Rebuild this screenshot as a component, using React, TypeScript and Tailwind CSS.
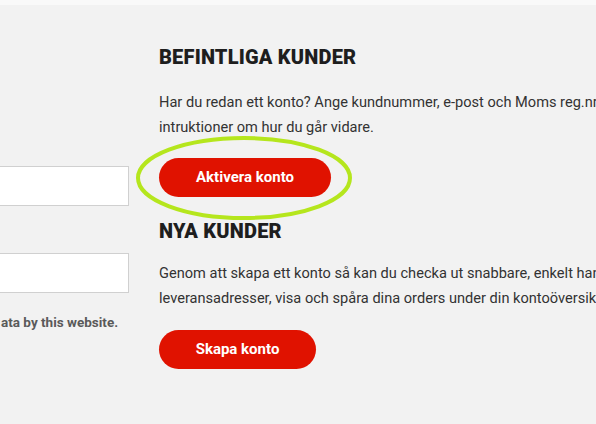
import React from "react";

export default function App() {
  return (
    <div className="w-[596px] h-[424px] overflow-hidden bg-[#f9f9f9] pt-[5px]" style={{ fontFamily: "Roboto, 'Liberation Sans', sans-serif" }}>
      <div className="relative h-[419px] bg-[#f2f2f2] flex">
        <div className="w-[159px] shrink-0 flex flex-col">
          <div className="mt-[161px] w-[129px] h-[40px] bg-white border border-[#d0d0d0] border-l-0"></div>
          <div className="mt-[47px] w-[129px] h-[40px] bg-white border border-[#d0d0d0] border-l-0"></div>
          <div className="mt-[20px] pl-[1px] text-[13.5px] leading-[18px] font-bold text-[#5a5a5a] whitespace-nowrap">ata by this website.</div>
        </div>
        <div className="flex-1 min-w-0 flex flex-col">
          <h2 className="mt-[40px] text-[20px] leading-[25px] font-black tracking-[0.2px] text-[#1e1e1e] whitespace-nowrap">BEFINTLIGA KUNDER</h2>
          <p className="mt-[20px] text-[14.6px] leading-[25px] text-[#333] whitespace-nowrap">
            Har du redan ett konto? Ange kundnummer, e-post och Moms reg.nr för att få
            <br />
            intruktioner om hur du går vidare.
          </p>
          <button className="mt-[18px] w-[172px] h-[39px] rounded-full bg-[#e01200] text-white text-[15px] font-bold">Aktivera konto</button>
          <h2 className="mt-[22px] text-[20px] leading-[25px] font-black tracking-[0.2px] text-[#1e1e1e] whitespace-nowrap">NYA KUNDER</h2>
          <p className="mt-[17px] text-[14.6px] leading-[25px] text-[#333] whitespace-nowrap">
            Genom att skapa ett konto så kan du checka ut snabbare, enkelt hantera flera
            <br />
            leveransadresser, visa och spåra dina orders under din kontoöversikt.
          </p>
          <button className="mt-[19px] w-[157px] h-[39px] rounded-full bg-[#e01200] text-white text-[15px] font-bold">Skapa konto</button>
        </div>
        <svg className="absolute left-[134px] top-[129px] pointer-events-none" width="222" height="90" viewBox="0 0 222 90">
          <ellipse cx="110" cy="44" rx="106" ry="40" fill="none" stroke="#b5e61d" strokeWidth="4" />
        </svg>
      </div>
    </div>
  );
}
